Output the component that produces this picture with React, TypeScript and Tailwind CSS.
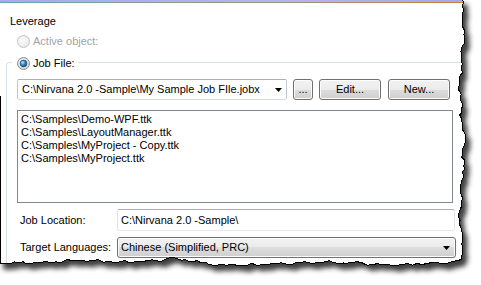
import React from "react";

function rng(seed: number) {
  let s = seed;
  return () => {
    s = (s * 16807) % 2147483647;
    return (s - 1) / 2147483646;
  };
}

function interp(pts: [number, number][], x: number) {
  for (let i = 0; i < pts.length - 1; i++) {
    const [x0, y0] = pts[i];
    const [x1, y1] = pts[i + 1];
    if ((x <= x0 && x >= x1) || (x >= x0 && x <= x1)) {
      const t = x1 === x0 ? 0 : (x - x0) / (x1 - x0);
      return y0 + (y1 - y0) * t;
    }
  }
  return pts[pts.length - 1][1];
}

function buildTorn() {
  const r = rng(11);
  const right: [number, number][] = [];
  for (let y = -2; y <= 256; y += 3) {
    right.push([
      462 + 1.8 * Math.sin(y / 19) + 1.1 * Math.sin(y / 5.3 + 1) + (r() - 0.5) * 2.4,
      y,
    ]);
  }
  const ctrl: [number, number][] = [
    [464, 258],
    [452, 262],
    [440, 263],
    [390, 265],
    [330, 262],
    [300, 263],
    [250, 265],
    [215, 265],
    [175, 258],
    [150, 261],
    [120, 262],
    [78, 260],
    [40, 263],
    [20, 262],
    [0, 263],
  ];
  const bottom: [number, number][] = [];
  for (let x = 461; x >= -2; x -= 3) {
    bottom.push([x, interp(ctrl, x) + (r() - 0.5) * 2.2 + 0.7 * Math.sin(x / 4.1)]);
  }
  const all = [...right, ...bottom];
  const edge = all.map((p, i) => `${i === 0 ? "M" : "L"}${p[0].toFixed(1)} ${p[1].toFixed(1)}`).join(" ");
  const paper = `M-2 -2 L${right[0][0].toFixed(1)} -2 ` + all.map((p) => `L${p[0].toFixed(1)} ${p[1].toFixed(1)}`).join(" ") + " L-2 263 Z";
  const lastY = bottom[bottom.length - 1][1];
  return { edge, paper, lastY };
}

function Radio({ checked, disabled }: { checked?: boolean; disabled?: boolean }) {
  const id = checked ? "rc" : disabled ? "rd" : "ru";
  return (
    <svg width="13" height="13" viewBox="0 0 13 13" className="shrink-0">
      <defs>
        <radialGradient id={id + "bg"} cx="40%" cy="40%" r="70%">
          <stop offset="0%" stopColor={disabled ? "#fbfbfb" : "#f6f6f6"} />
          <stop offset="100%" stopColor={disabled ? "#e8e8e8" : "#d4d4d4"} />
        </radialGradient>
        <radialGradient id={id + "dot"} cx="38%" cy="35%" r="70%">
          <stop offset="0%" stopColor="#bfeaff" />
          <stop offset="45%" stopColor="#3c8fd0" />
          <stop offset="100%" stopColor="#17406b" />
        </radialGradient>
      </defs>
      <circle cx="6.5" cy="6.5" r="6" fill={`url(#${id}bg)`} stroke={disabled ? "#c4c4c4" : "#8a8c8e"} strokeWidth="1" />
      {checked && <circle cx="6.5" cy="6.5" r="3.4" fill={`url(#${id}dot)`} stroke="#24507c" strokeWidth="0.7" />}
    </svg>
  );
}

function Arrow() {
  return (
    <svg width="7" height="4" viewBox="0 0 7 4" className="shrink-0">
      <path d="M0 0H7L3.5 4Z" fill="#000" />
    </svg>
  );
}

const btn =
  "flex items-center justify-center h-[21px] rounded-[3px] border border-[#707070] bg-[linear-gradient(#f2f2f2,#ebebeb_50%,#dddddd_50%,#cfcfcf)] shadow-[inset_0_0_0_1px_#fcfcfc]";

export default function App() {
  const { edge, paper, lastY } = buildTorn();
  return (
    <div className="relative w-[481px] h-[285px] overflow-hidden bg-white font-['Liberation_Sans',Arial,sans-serif] text-[11px] leading-[13px] text-black">
      <div className="h-[2px] bg-[linear-gradient(90deg,#a9a9ee,#b4b4f2_60%,#a6a6e6)]" />
      <div className="h-[1px] bg-[linear-gradient(90deg,#6fa3a6,#8f9c8a_50%,#d27a3a)]" />
      <div className="pl-[10px] pt-[12px]">Leverage</div>
      <div className="flex items-center ml-[17px] mt-[7px] h-[13px] gap-[3px] text-[#a3a3a3]">
        <Radio disabled />
        <span>Active object:</span>
      </div>
      <div className="ml-[6px] mt-[14px] w-[470px] h-[230px] border border-[#d5dfe5] rounded-[3px]">
        <div className="-mt-[6px] ml-[5px] w-fit flex items-center gap-[3px] bg-white pl-[5px] pr-[3px] h-[13px]">
          <Radio checked />
          <span>Job File:</span>
        </div>
        <div className="flex items-center ml-[10px] mt-[9px] h-[21px]">
          <div className="flex items-center justify-between w-[270px] h-[21px] border border-[#abadb3] border-l-[#c3c7cf] border-r-[#c3c7cf] border-b-[#d8dde4] rounded-[2px] pl-[4px] pr-[4px]">
            <span className="whitespace-nowrap">C:\Nirvana 2.0 -Sample\My Sample Job FIle.jobx</span>
            <Arrow />
          </div>
          <div className={`${btn} ml-[6px] w-[20px]`}>...</div>
          <div className={`${btn} ml-[6px] w-[62px]`}>Edit...</div>
          <div className={`${btn} ml-[7px] w-[62px]`}>New...</div>
        </div>
        <div className="ml-[10px] mt-[10px] w-[436px] h-[93px] border border-[#828790] pt-[2px] pl-[3px]">
          <div>C:\Samples\Demo-WPF.ttk</div>
          <div>C:\Samples\LayoutManager.ttk</div>
          <div>C:\Samples\MyProject - Copy.ttk</div>
          <div>C:\Samples\MyProject.ttk</div>
        </div>
        <div className="flex items-center ml-[13px] mt-[6px]">
          <div className="w-[97px]">Job Location:</div>
          <div className="flex items-center w-[338px] h-[22px] border border-[#abadb3] border-l-[#e2e3ea] border-r-[#e2e3ea] border-b-[#e3e9ef] rounded-[2px] pl-[3px]">
            C:\Nirvana 2.0 -Sample\
          </div>
        </div>
        <div className="flex items-center ml-[13px] mt-[6px]">
          <div className="w-[97px]">Target Languages:</div>
          <div className={`${btn} !justify-between w-[339px] pl-[3px] pr-[5px]`}>
            <span>Chinese (Simplified, PRC)</span>
            <Arrow />
          </div>
        </div>
      </div>
      <svg className="absolute inset-0 pointer-events-none" width="481" height="285" viewBox="0 0 481 285">
        <defs>
          <clipPath id="outside">
            <path clipRule="evenodd" d={`M-5 -5 H490 V295 H-5 Z ${paper}`} />
          </clipPath>
          <filter id="blur" x="-10%" y="-10%" width="120%" height="120%">
            <feGaussianBlur stdDeviation="2.6" />
          </filter>
        </defs>
        <path fillRule="evenodd" fill="#fff" d={`M-5 -5 H490 V295 H-5 Z ${paper}`} />
        <g clipPath="url(#outside)">
          <path d={paper} transform="translate(5,6)" fill="#2c2c2c" opacity="0.9" filter="url(#blur)" />
        </g>
        <path d={edge} fill="none" stroke="#000" strokeWidth="1" shapeRendering="crispEdges" />
        <path d={`M0.5 96 V${lastY.toFixed(1)}`} stroke="#000" strokeWidth="1" shapeRendering="crispEdges" />
      </svg>
    </div>
  );
}
